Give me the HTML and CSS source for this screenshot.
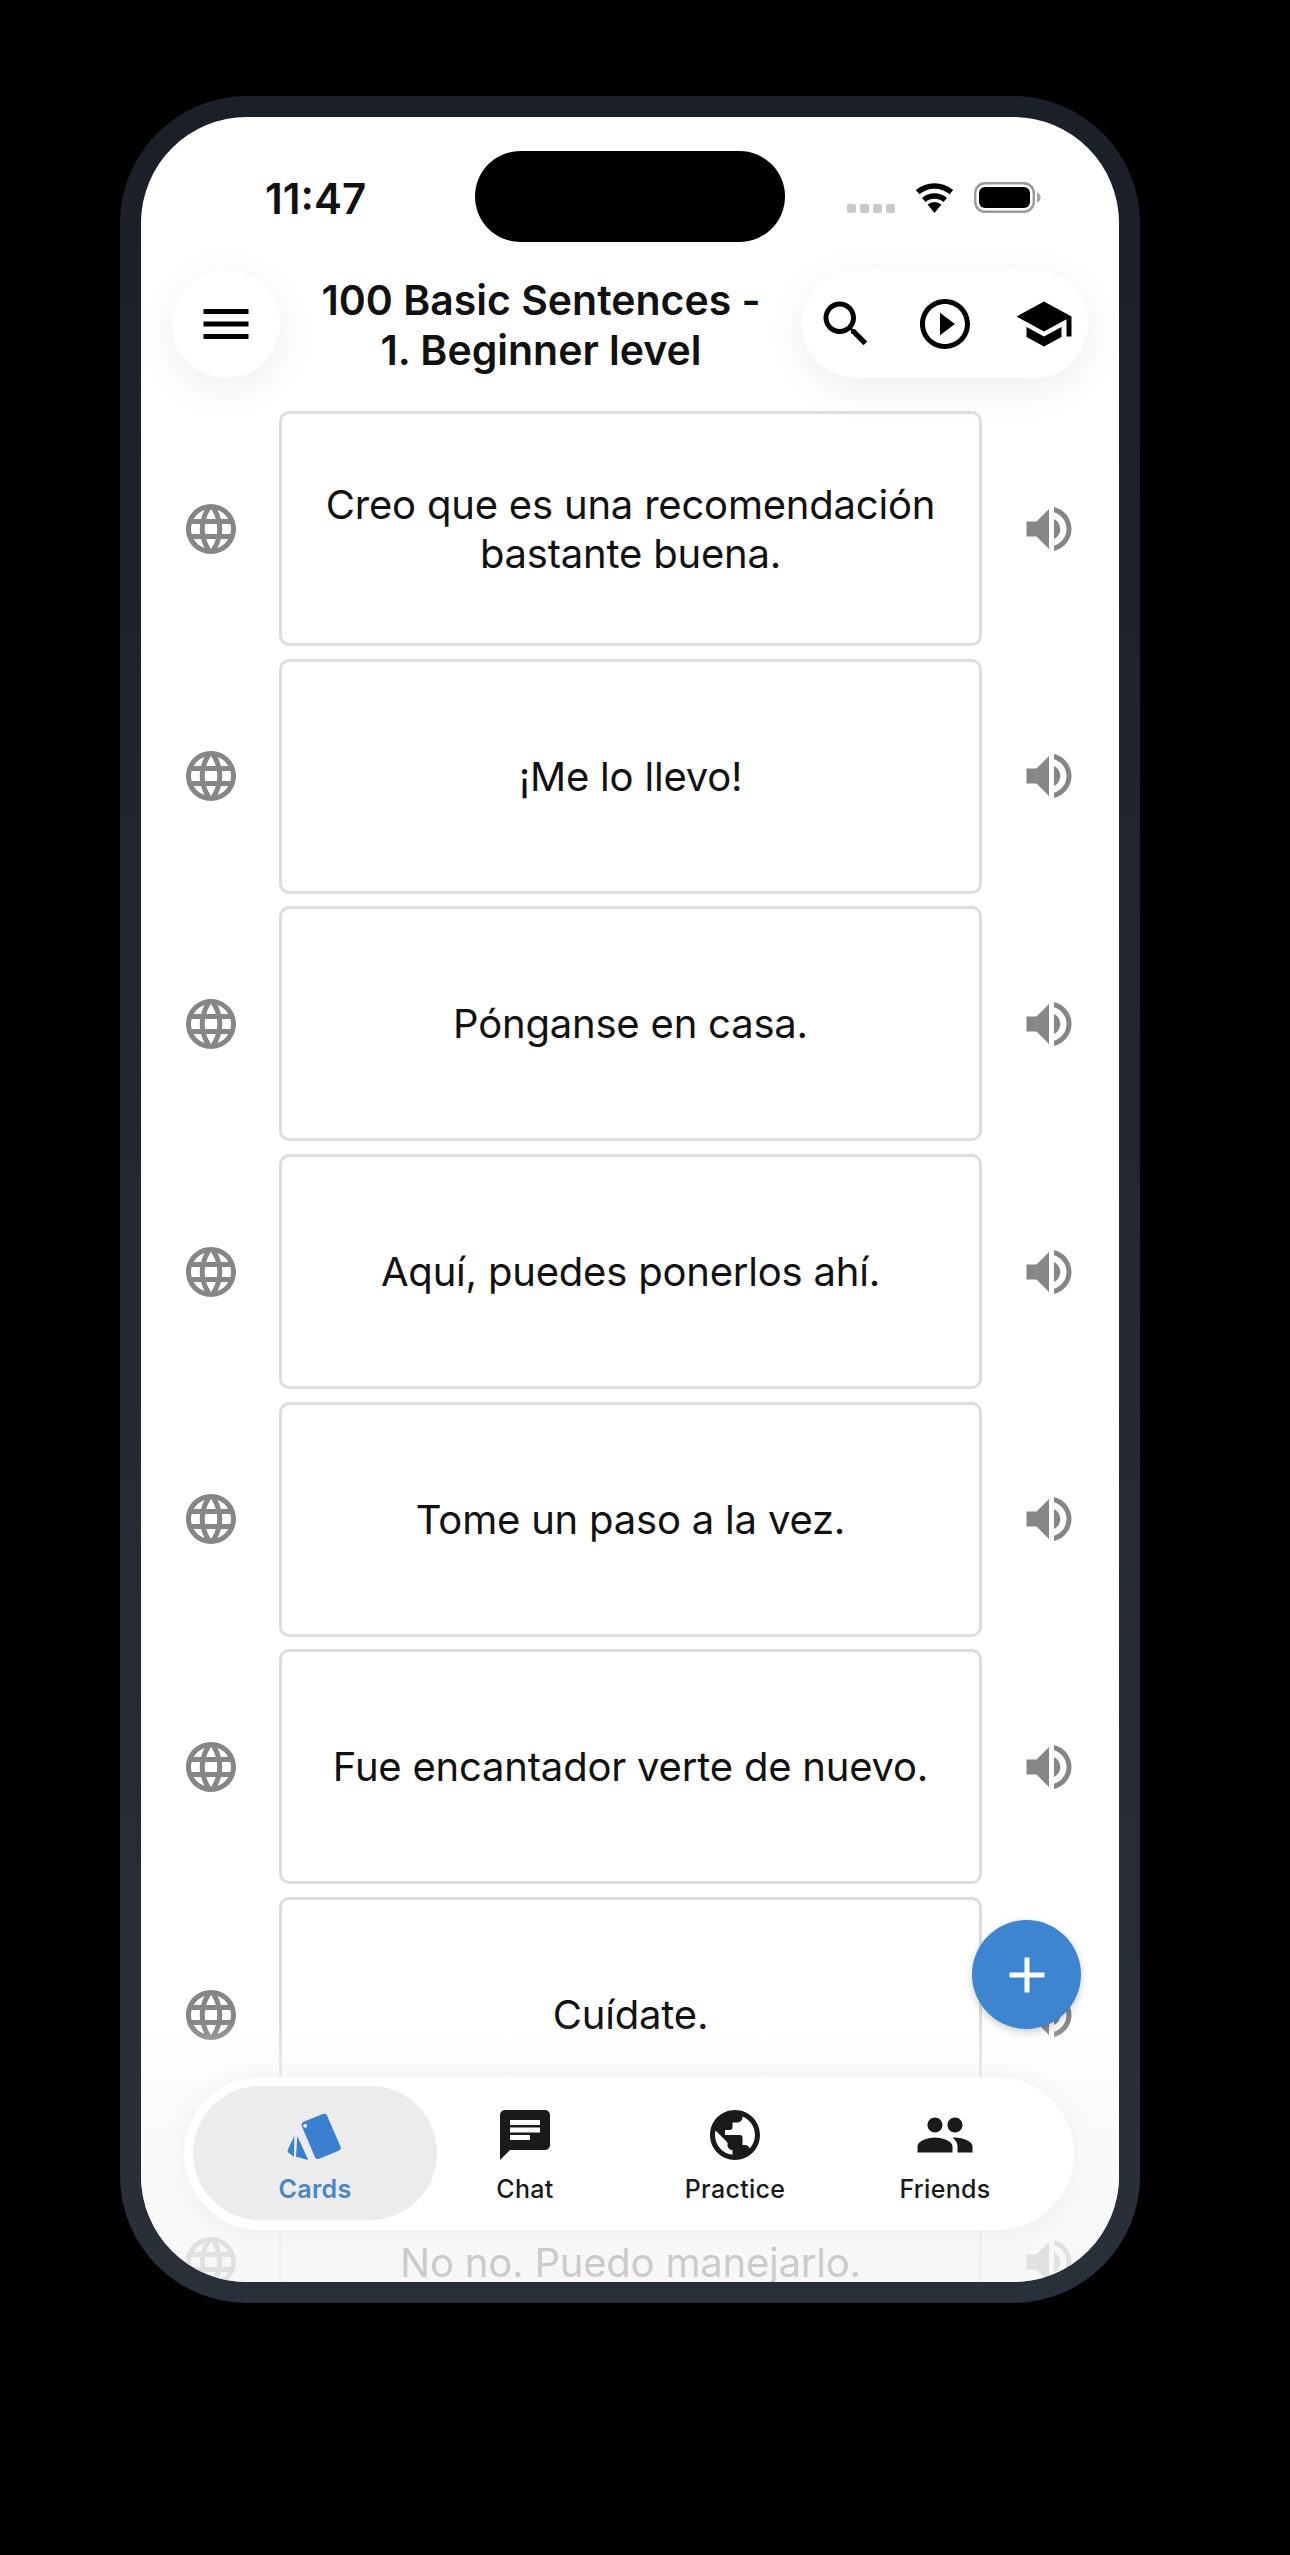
FILE: index.html
```html
<!DOCTYPE html>
<html lang="en">
<head>
  <meta charset="UTF-8">
  <meta name="viewport" content="width=device-width, initial-scale=1.0">
  <title>100 Basic Sentences - Cards</title>
  <link rel="stylesheet" href="styles.css">
</head>
<body>
  <svg class="sprites" width="0" height="0" aria-hidden="true">
    <symbol id="i-globe" viewBox="0 0 24 24"><path d="M11.99 2C6.47 2 2 6.48 2 12s4.47 10 9.99 10C17.52 22 22 17.52 22 12S17.52 2 11.99 2zm6.93 6h-2.95c-.32-1.25-.78-2.45-1.38-3.56 1.84.63 3.37 1.91 4.33 3.56zM12 4.04c.83 1.2 1.48 2.53 1.91 3.96h-3.82c.43-1.43 1.08-2.76 1.91-3.96zM4.26 14C4.1 13.36 4 12.69 4 12s.1-1.36.26-2h3.38c-.08.66-.14 1.32-.14 2 0 .68.06 1.34.14 2H4.26zm.82 2h2.95c.32 1.25.78 2.45 1.38 3.56-1.84-.63-3.37-1.9-4.33-3.56zm2.95-8H5.08c.96-1.66 2.49-2.93 4.33-3.56C8.81 5.55 8.35 6.75 8.03 8zM12 19.96c-.83-1.2-1.48-2.53-1.91-3.96h3.82c-.43 1.43-1.08 2.76-1.91 3.96zM14.34 14H9.66c-.09-.66-.16-1.32-.16-2 0-.68.07-1.35.16-2h4.68c.09.65.16 1.32.16 2 0 .68-.07 1.34-.16 2zm.25 5.56c.6-1.11 1.06-2.31 1.38-3.56h2.95c-.96 1.65-2.49 2.93-4.33 3.56zM16.36 14c.08-.66.14-1.32.14-2 0-.68-.06-1.34-.14-2h3.38c.16.64.26 1.31.26 2s-.1 1.36-.26 2h-3.38z"/></symbol>
    <symbol id="i-sound" viewBox="0 0 24 24"><path d="M3 9v6h4l5 5V4L7 9H3zm13.5 3c0-1.77-1.02-3.29-2.5-4.03v8.05c1.48-.73 2.5-2.25 2.5-4.02zM14 3.23v2.06c2.89.86 5 3.54 5 6.71s-2.11 5.85-5 6.71v2.06c4.01-.91 7-4.49 7-8.77s-2.99-7.86-7-8.77z"/></symbol>
  </svg>

  <div class="phone">
    <div class="screen">
      <div class="status">
        <span class="time">11:47</span>
        <div class="island"></div>
        <div class="indicators">
          <div class="signal"><i></i><i></i><i></i><i></i></div>
          <svg class="wifi" viewBox="0 0 41 31"><path d="M20.5 31 13.6 22.6a10.6 10.6 0 0 1 13.8 0z"/><path d="M9.8 18a16.4 16.4 0 0 1 21.4 0" class="arc"/><path d="M3.6 10.2a26 26 0 0 1 33.8 0" class="arc"/></svg>
          <svg class="battery" viewBox="0 0 67 31"><rect x="1.2" y="1.2" width="58.6" height="28.6" rx="10" fill="#fff" stroke="#9a9a9a" stroke-width="2.4"/><rect x="5" y="5" width="51" height="21" rx="6" fill="#000"/><path d="M63 10.500c2.400.8 3.600 2.600 3.600 5s-1.200 4.200-3.600 5z" fill="#a5a5a5"/></svg>
        </div>
      </div>

      <div class="header">
        <div class="menu-btn">
          <svg class="icon" viewBox="0 0 24 24"><path d="M3 18h18v-2H3v2zm0-5h18v-2H3v2zm0-7v2h18V6H3z"/></svg>
        </div>
        <h1 class="title">100 Basic Sentences -<br>1. Beginner level</h1>
        <div class="actions">
          <svg class="icon" viewBox="0 0 24 24"><path d="M15.5 14h-.79l-.28-.27C15.41 12.59 16 11.11 16 9.5 16 5.91 13.09 3 9.5 3S3 5.91 3 9.5 5.91 16 9.5 16c1.61 0 3.09-.59 4.23-1.57l.27.28v.79l5 4.99L20.49 19l-4.99-5zm-6 0C7.01 14 5 11.99 5 9.5S7.01 5 9.5 5 14 7.01 14 9.5 11.99 14 9.5 14z"/></svg>
          <svg class="icon" viewBox="0 0 24 24"><path d="M10 16.5l6-4.500-6-4.500v9zM12 2C6.480 2 2 6.480 2 12s4.480 10 10 10 10-4.480 10-10S17.520 2 12 2zm0 18c-4.410 0-8-3.590-8-8s3.590-8 8-8 8 3.590 8 8-3.590 8-8 8z"/></svg>
          <svg class="icon" viewBox="0 0 24 24"><path d="M5 13.180v4L12 21l7-3.820v-4L12 17l-7-3.820zM12 3L1 9l11 6 9-4.910V17h2V9L12 3z"/></svg>
        </div>
      </div>

      <div class="rows">
        <div class="row">
          <svg class="icon side"><use href="#i-globe"/></svg>
          <div class="card">Creo que es una recomendación bastante buena.</div>
          <svg class="icon side"><use href="#i-sound"/></svg>
        </div>
        <div class="row">
          <svg class="icon side"><use href="#i-globe"/></svg>
          <div class="card">¡Me lo llevo!</div>
          <svg class="icon side"><use href="#i-sound"/></svg>
        </div>
        <div class="row">
          <svg class="icon side"><use href="#i-globe"/></svg>
          <div class="card">Pónganse en casa.</div>
          <svg class="icon side"><use href="#i-sound"/></svg>
        </div>
        <div class="row">
          <svg class="icon side"><use href="#i-globe"/></svg>
          <div class="card">Aquí, puedes ponerlos ahí.</div>
          <svg class="icon side"><use href="#i-sound"/></svg>
        </div>
        <div class="row">
          <svg class="icon side"><use href="#i-globe"/></svg>
          <div class="card">Tome un paso a la vez.</div>
          <svg class="icon side"><use href="#i-sound"/></svg>
        </div>
        <div class="row">
          <svg class="icon side"><use href="#i-globe"/></svg>
          <div class="card">Fue encantador verte de nuevo.</div>
          <svg class="icon side"><use href="#i-sound"/></svg>
        </div>
        <div class="row">
          <svg class="icon side"><use href="#i-globe"/></svg>
          <div class="card">Cuídate.</div>
          <svg class="icon side"><use href="#i-sound"/></svg>
        </div>
        <div class="row">
          <svg class="icon side"><use href="#i-globe"/></svg>
          <div class="card">No no. Puedo manejarlo.</div>
          <svg class="icon side"><use href="#i-sound"/></svg>
        </div>
      </div>

      <div class="fade"></div>

      <div class="fab">
        <svg class="fab-icon" viewBox="0 0 24 24"><path d="M19 13h-6v6h-2v-6H5v-2h6V5h2v6h6v2z"/></svg>
      </div>

      <div class="tabbar">
        <div class="tab active">
          <svg class="icon" viewBox="0 0 60 60">
            <path d="M9.300 31 2.700 45c-.4 1 0 2 .8 2.800L9 51.700z"/>
            <path d="M12.300 31 11 51.700l12.300 3.300z"/>
            <path d="M18.700 16.800 37.700 9a3.500 3.500 0 0 1 4.500 1.900L55.400 41.300a3.500 3.500 0 0 1-1.900 4.500L34.300 53.700a3.500 3.500 0 0 1-4.500-1.900L16.800 21.300a3.500 3.500 0 0 1 1.900-4.500z"/>
            <circle cx="20.200" cy="20.700" r="2" fill="#ececec"/>
          </svg>
          <span>Cards</span>
        </div>
        <div class="tab">
          <svg class="icon" viewBox="0 0 24 24"><path d="M20 2H4c-1.100 0-1.990.9-1.990 2L2 22l4-4h14c1.100 0 2-.9 2-2V4c0-1.100-.9-2-2-2zM6 9h12v2H6V9zm8 5H6v-2h8v2zm4-6H6V6h12v2z"/></svg>
          <span>Chat</span>
        </div>
        <div class="tab">
          <svg class="icon" viewBox="0 0 24 24"><path d="M12 2C6.480 2 2 6.480 2 12s4.480 10 10 10 10-4.480 10-10S17.520 2 12 2zm-1 17.930c-3.950-.49-7-3.850-7-7.930 0-.62.08-1.210.21-1.790L9 15v1c0 1.100.9 2 2 2v1.930zm6.900-2.540c-.26-.81-1-1.390-1.900-1.390h-1v-3c0-.55-.45-1-1-1H8v-2h2c.55 0 1-.45 1-1V7h2c1.100 0 2-.9 2-2v-.41c2.930 1.190 5 4.060 5 7.410 0 2.080-.8 3.970-2.100 5.390z"/></svg>
          <span>Practice</span>
        </div>
        <div class="tab">
          <svg class="icon" viewBox="0 0 24 24"><path d="M16 11c1.660 0 2.990-1.340 2.990-3S17.660 5 16 5c-1.660 0-3 1.340-3 3s1.340 3 3 3zm-8 0c1.660 0 2.990-1.340 2.990-3S9.660 5 8 5C6.340 5 5 6.340 5 8s1.340 3 3 3zm0 2c-2.330 0-7 1.170-7 3.500V19h14v-2.500c0-2.330-4.670-3.500-7-3.500zm8 0c-.29 0-.62.02-.97.05 1.160.84 1.970 1.970 1.970 3.450V19h6v-2.500c0-2.330-4.670-3.500-7-3.500z"/></svg>
          <span>Friends</span>
        </div>
      </div>
    </div>
  </div>
</body>
</html>
```

FILE: styles.css
```css
html, body {
  margin: 0;
  background: #000;
}
body {
  height: 2555px;
  padding: 96px 0 0 120px;
  box-sizing: border-box;
  font-family: Inter, "Liberation Sans", sans-serif;
  color: #111;
}
.sprites { display: block; height: 0; }

.phone {
  width: 1020px;
  height: 2207px;
  padding: 21px;
  box-sizing: border-box;
  border-radius: 127px;
  background: linear-gradient(#1b1f27, #2a303a);
}
.screen {
  position: relative;
  height: 100%;
  overflow: hidden;
  border-radius: 106px;
  background: #fff;
}

/* status bar */
.status {
  display: grid;
  grid-template-columns: 334px 310px 1fr;
  height: 152px;
  padding-top: 34px;
  box-sizing: border-box;
}
.time {
  padding: 24px 0 0 124px;
  font-size: 42px;
  font-weight: 600;
  line-height: 48px;
}
.island {
  height: 91px;
  border-radius: 46px;
  background: #000;
}
.indicators {
  display: flex;
  align-items: flex-start;
  padding: 31px 0 0 62px;
}
.signal {
  display: flex;
  gap: 4px;
  margin-top: 22px;
  width: 67px;
}
.signal i {
  width: 9px;
  height: 9px;
  border-radius: 2px;
  background: #c9c9c9;
}
.wifi { width: 41px; height: 31px; }
.wifi .arc { fill: none; stroke: #000; stroke-width: 5.5; }
.battery { width: 67px; height: 31px; margin-left: 19px; }

/* header */
.header {
  display: flex;
  align-items: center;
  height: 110px;
  padding: 0 31px 0 31px;
  margin-bottom: 32px;
}
.menu-btn {
  display: flex;
  align-items: center;
  justify-content: center;
  width: 108px;
  height: 108px;
  border-radius: 50%;
  background: #fff;
  box-shadow: 0 10px 40px rgba(0, 0, 0, .07);
}
.title {
  flex: 1;
  margin: 2px 0 0;
  font-size: 41px;
  font-weight: 600;
  line-height: 50px;
  text-align: center;
}
.actions {
  display: flex;
  align-items: center;
  gap: 39px;
  height: 108px;
  padding: 0 14px;
  border-radius: 54px;
  background: #fff;
  box-shadow: 0 10px 40px rgba(0, 0, 0, .07);
}
.icon {
  display: block;
  width: 60px;
  height: 60px;
  fill: #000;
}

/* sentences */
.rows {
  display: flex;
  flex-direction: column;
  gap: 12.7px;
}
.row {
  display: flex;
  align-items: center;
  gap: 37px;
  height: 235px;
  padding-left: 40px;
  flex-shrink: 0;
}
.row .card { margin-left: 1px; }
.side { fill: #868686; flex-shrink: 0; }
.card {
  display: flex;
  align-items: center;
  justify-content: center;
  width: 703px;
  height: 100%;
  padding: 0 20px;
  box-sizing: border-box;
  border: 3px solid #ddd;
  border-radius: 10px;
  font-size: 40px;
  letter-spacing: -.2px;
  line-height: 49px;
  text-align: center;
}

/* overlays */
.fade {
  position: absolute;
  left: 0;
  right: 0;
  bottom: 0;
  height: 260px;
  background: linear-gradient(rgba(255, 255, 255, 0), rgba(250, 250, 250, .75) 30%, rgba(245, 245, 245, .82));
}
.fab {
  position: absolute;
  left: 831px;
  top: 1803px;
  display: flex;
  align-items: center;
  justify-content: center;
  width: 109px;
  height: 109px;
  border-radius: 50%;
  background: #3d85d1;
  box-shadow: 0 3px 8px rgba(0, 0, 0, .2);
}
.fab-icon { width: 60px; height: 60px; fill: #fff; }
.tabbar {
  position: absolute;
  left: 43px;
  right: 45px;
  bottom: 52px;
  display: flex;
  height: 153px;
  padding: 9px 0 10px 26px;
  box-sizing: border-box;
  border-radius: 77px;
  background: #fff;
  box-shadow: 0 0 26px rgba(0, 0, 0, .05);
}
.tab {
  position: relative;
  display: flex;
  flex-direction: column;
  align-items: center;
  width: 210px;
  font-size: 25px;
  font-weight: 500;
  letter-spacing: .3px;
  line-height: 30px;
  color: #1a1a1a;
}
.tab .icon { position: relative; margin-top: 19px; fill: #1a1a1a; }
.tab span { position: relative; margin-top: 9px; }
.tab.active { color: #4a87c5; font-weight: 600; }
.tab.active .icon { fill: #3b80d0; }
.tab.active::before {
  content: "";
  position: absolute;
  top: 0;
  bottom: 0;
  left: -17px;
  right: -17px;
  border-radius: 67px;
  background: #ececec;
}
```
